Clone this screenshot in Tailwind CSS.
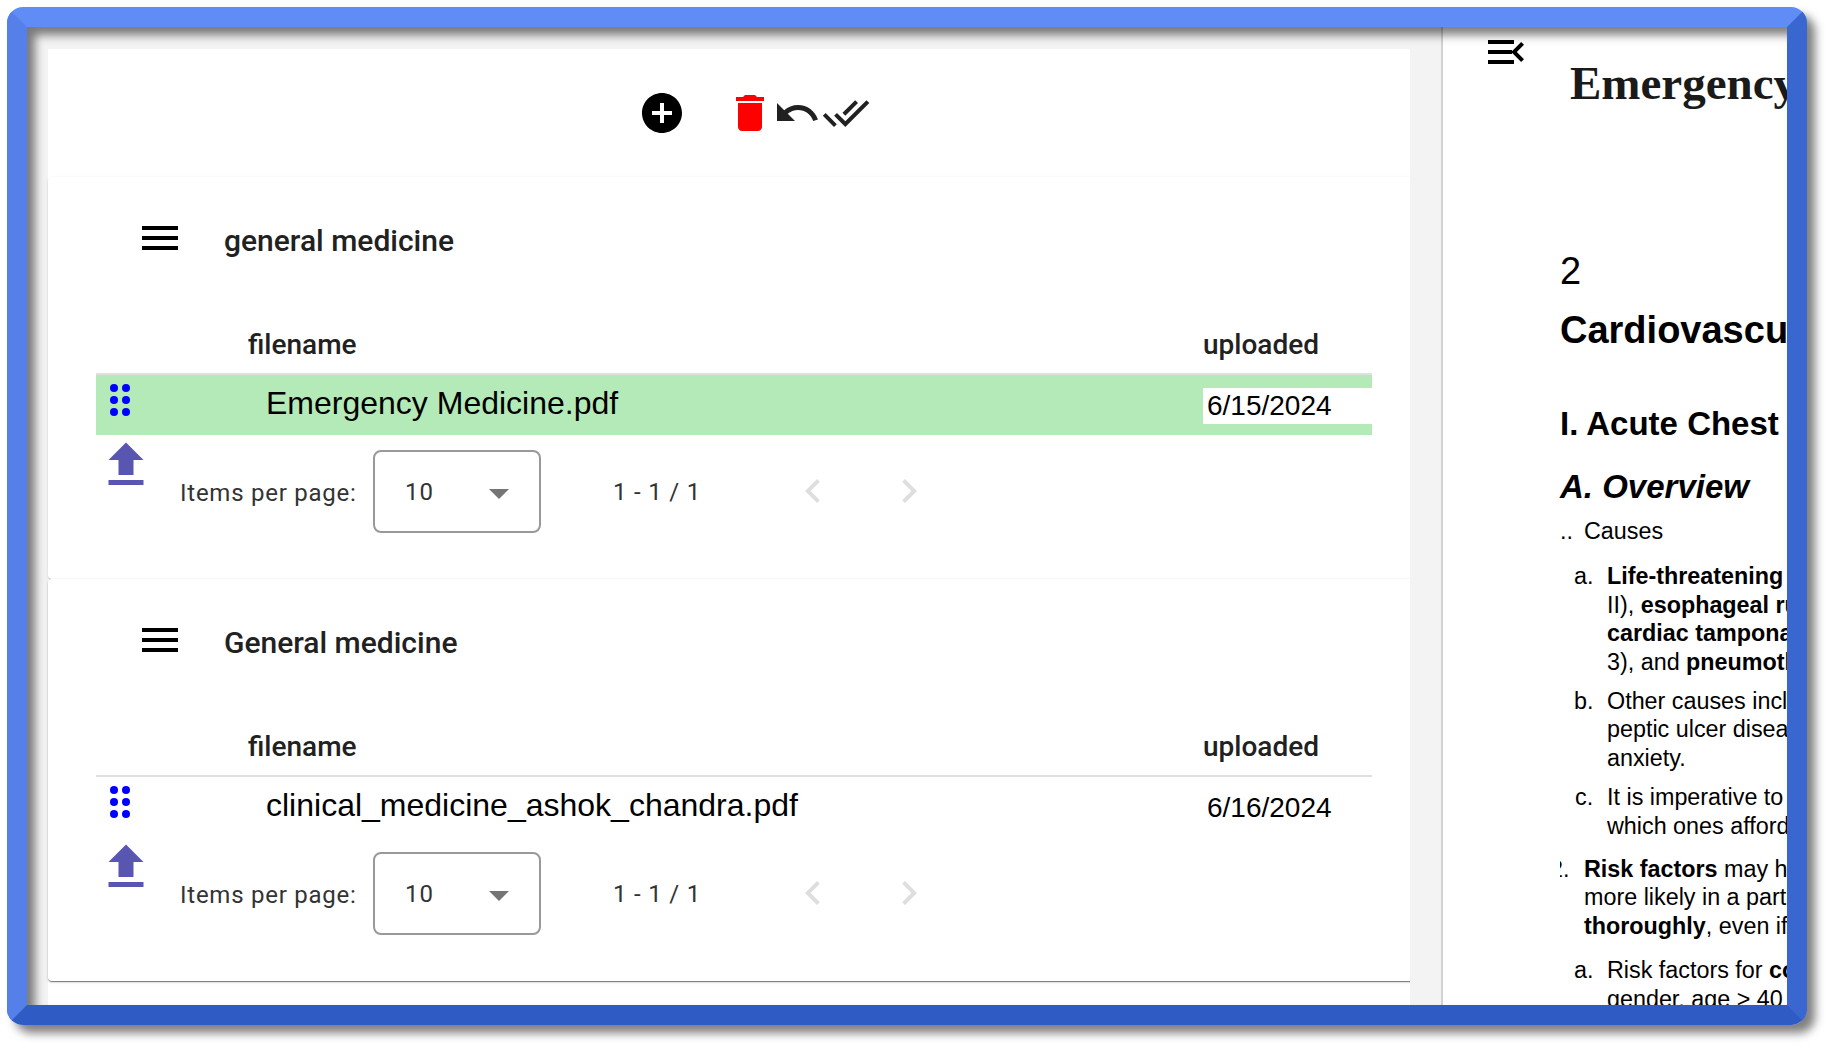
<!DOCTYPE html>
<html lang="en">

<head>
	<meta charset="UTF-8" />
	<meta name="viewport" content="width=device-width, initial-scale=1.0" />
	<title>Documents</title>
	<script src="https://cdn.jsdelivr.net/npm/@tailwindcss/browser@4"></script>
</head>

<body class="bg-white h-screen overflow-hidden font-['Roboto',sans-serif]">
	<div class="pl-[7px] pt-[7px]">
		<div class="relative w-[1800px] h-[1018px] border-[20px] border-t-[#5f8cf5] border-l-[#5580ea] border-r-[#3a66d0] border-b-[#2f5cc4] rounded-[16px] shadow-[8px_8px_10px_rgba(0,0,0,0.5)] flex overflow-hidden">

			<!-- left: document lists -->
			<div class="w-[1414px] h-full bg-[#f3f3f3] pl-[21px] pr-[31px] pt-[22px] overflow-hidden shrink-0">
				<div class="bg-white h-[1000px] [clip-path:inset(0_0_0_-10px)]">
					<div class="h-[128px] flex items-center pl-[590px]">
						<svg class="w-12 h-12" viewBox="0 0 24 24" fill="#000"><path d="M12 2C6.48 2 2 6.48 2 12s4.48 10 10 10 10-4.48 10-10S17.52 2 12 2zm5 11h-4v4h-2v-4H7v-2h4V7h2v4h4v2z" /></svg>
						<svg class="w-12 h-12 ml-10" viewBox="0 0 24 24" fill="#ff0000"><path d="M6 19c0 1.1.9 2 2 2h8c1.1 0 2-.9 2-2V7H6v12zM19 4h-3.5l-1-1h-5l-1 1H5v2h14V4z" /></svg>
						<svg class="w-12 h-12 -ml-px" viewBox="0 0 24 24" fill="#212121"><path d="M12.5 8c-2.65 0-5.05.99-6.9 2.6L2 7v9h9l-3.62-3.62c1.39-1.16 3.16-1.88 5.12-1.88 3.54 0 6.55 2.31 7.6 5.5l2.37-.78C21.08 11.03 17.15 8 12.5 8z" /></svg>
						<svg class="w-12 h-12 ml-px" viewBox="0 0 24 24" fill="#212121"><path d="M18 7l-1.41-1.41-6.34 6.34 1.41 1.41L18 7zm4.24-1.41L11.66 16.17 7.48 12l-1.41 1.41L11.66 19l12-12-1.42-1.41zM.41 13.41L6 19l1.41-1.41L1.83 12 .41 13.41z" /></svg>
					</div>

					<!-- card 1 -->
					<section class="relative h-[402px] mr-[-8px] bg-white rounded-[4px] pl-[48px] pr-[46px] pt-[37px] shadow-[0_2px_1px_-1px_rgba(0,0,0,0.2),0_1px_1px_rgba(0,0,0,0.14),0_1px_3px_rgba(0,0,0,0.12)]">
						<div class="flex items-center h-[48px] pl-[40px]">
							<svg class="w-12 h-12" viewBox="0 0 24 24" fill="#000"><path d="M3 18h18v-2H3v2zm0-5h18v-2H3v2zm0-7v2h18V6H3z" /></svg>
							<h2 class="ml-[40px] text-[30px] font-medium text-[#212121] mt-[4px]">general medicine</h2>
						</div>
						<div class="flex mt-[59px] h-[54px] pb-[5px] items-center border-b-2 border-[#e0e0e0] text-[28px] font-medium text-[#212121]">
							<span class="w-[1107px] pl-[152px]">filename</span>
							<span>uploaded</span>
						</div>
						<div class="flex items-center h-[60px] bg-[#b4eab7] text-black font-['Liberation_Sans',sans-serif]">
							<svg class="w-[48px] h-[48px] ml-[-4px] mt-[-21px] shrink-0" viewBox="0 0 48 48" fill="#0000ff"><circle cx="22" cy="17" r="4" /><circle cx="34" cy="17" r="4" /><circle cx="22" cy="29" r="4" /><circle cx="34" cy="29" r="4" /><circle cx="22" cy="41" r="4" /><circle cx="34" cy="41" r="4" /></svg>
							<span class="w-[1063px] pl-[126px] text-[32px] mt-[-5px]">Emergency Medicine.pdf</span>
							<span class="w-[169px] h-[36px] bg-white pl-[4px] text-[28px] leading-[36px] mt-[2px]">6/15/2024</span>
						</div>
						<div class="flex items-start">
							<svg class="w-[60px] h-[60px] shrink-0" viewBox="0 0 24 24" fill="#5856b0"><path d="M9 16h6v-6h4l-7-7-7 7h4zm-4 2h14v2H5z" /></svg>
							<span class="w-[193px] ml-[24px] mt-[43px] text-[24px] leading-[30px] tracking-[0.75px] text-[#333] shrink-0">Items per page:</span>
							<div class="relative w-[168px] h-[83px] mt-[15px] border-2 border-[#999] rounded-[8px] flex items-center pl-[30px] text-[24px] tracking-[1.1px] text-[#333] shrink-0">10
								<svg class="absolute left-[114px] top-[37px] w-[20px] h-[10px]" viewBox="0 0 20 10" fill="#757575"><path d="M0 0h20L10 10z" /></svg>
							</div>
							<span class="w-[175px] ml-[72px] mt-[42px] text-[24px] leading-[30px] tracking-[0.8px] text-[#333] shrink-0">1 - 1 / 1</span>
							<svg class="w-12 h-12 mt-[32px] ml-[1px] shrink-0" viewBox="0 0 24 24" fill="#dedede"><path d="M15.41 7.41L14 6l-6 6 6 6 1.41-1.41L10.83 12z" /></svg>
							<svg class="w-12 h-12 mt-[32px] ml-[48px] shrink-0" viewBox="0 0 24 24" fill="#dedede"><path d="M10 6L8.59 7.41 13.17 12l-4.58 4.59L10 18l6-6z" /></svg>
						</div>
					</section>

					<!-- card 2 -->
					<section class="relative h-[402px] mr-[-8px] bg-white rounded-[4px] pl-[48px] pr-[46px] pt-[37px] shadow-[0_2px_1px_-1px_rgba(0,0,0,0.3),0_1px_1px_rgba(0,0,0,0.2),0_1px_3px_rgba(0,0,0,0.2)]">
						<div class="flex items-center h-[48px] pl-[40px]">
							<svg class="w-12 h-12" viewBox="0 0 24 24" fill="#000"><path d="M3 18h18v-2H3v2zm0-5h18v-2H3v2zm0-7v2h18V6H3z" /></svg>
							<h2 class="ml-[40px] text-[30px] font-medium text-[#212121] mt-[4px]">General medicine</h2>
						</div>
						<div class="flex mt-[59px] h-[54px] pb-[5px] items-center border-b-2 border-[#e0e0e0] text-[28px] font-medium text-[#212121]">
							<span class="w-[1107px] pl-[152px]">filename</span>
							<span>uploaded</span>
						</div>
						<div class="flex items-center h-[60px] text-black font-['Liberation_Sans',sans-serif]">
							<svg class="w-[48px] h-[48px] ml-[-4px] mt-[-21px] shrink-0" viewBox="0 0 48 48" fill="#0000ff"><circle cx="22" cy="17" r="4" /><circle cx="34" cy="17" r="4" /><circle cx="22" cy="29" r="4" /><circle cx="34" cy="29" r="4" /><circle cx="22" cy="41" r="4" /><circle cx="34" cy="41" r="4" /></svg>
							<span class="w-[1063px] pl-[126px] text-[32px] mt-[-5px]">clinical_medicine_ashok_chandra.pdf</span>
							<span class="w-[169px] h-[36px] pl-[4px] text-[28px] leading-[36px] mt-[2px]">6/16/2024</span>
						</div>
						<div class="flex items-start">
							<svg class="w-[60px] h-[60px] shrink-0" viewBox="0 0 24 24" fill="#5856b0"><path d="M9 16h6v-6h4l-7-7-7 7h4zm-4 2h14v2H5z" /></svg>
							<span class="w-[193px] ml-[24px] mt-[43px] text-[24px] leading-[30px] tracking-[0.75px] text-[#333] shrink-0">Items per page:</span>
							<div class="relative w-[168px] h-[83px] mt-[15px] border-2 border-[#999] rounded-[8px] flex items-center pl-[30px] text-[24px] tracking-[1.1px] text-[#333] shrink-0">10
								<svg class="absolute left-[114px] top-[37px] w-[20px] h-[10px]" viewBox="0 0 20 10" fill="#757575"><path d="M0 0h20L10 10z" /></svg>
							</div>
							<span class="w-[175px] ml-[72px] mt-[42px] text-[24px] leading-[30px] tracking-[0.8px] text-[#333] shrink-0">1 - 1 / 1</span>
							<svg class="w-12 h-12 mt-[32px] ml-[1px] shrink-0" viewBox="0 0 24 24" fill="#dedede"><path d="M15.41 7.41L14 6l-6 6 6 6 1.41-1.41L10.83 12z" /></svg>
							<svg class="w-12 h-12 mt-[32px] ml-[48px] shrink-0" viewBox="0 0 24 24" fill="#dedede"><path d="M10 6L8.59 7.41 13.17 12l-4.58 4.59L10 18l6-6z" /></svg>
						</div>
					</section>
				</div>
			</div>

			<!-- right: pdf preview -->
			<div class="relative flex-1 h-full bg-white border-l-2 border-[#d2d2d2] overflow-hidden font-['Liberation_Sans',sans-serif] text-black whitespace-nowrap">
				<svg class="absolute left-[39px] top-[1px] w-12 h-12" viewBox="0 0 24 24" fill="#000"><path d="M3 18h13v-2H3v2zm0-5h12v-2H3v2zm0-7v2h13V6H3zm18 9.59L17.42 12 21 8.41 19.59 7l-5 5 5 5L21 15.59z" /></svg>
				<div class="pl-[117px] text-[23.33px] leading-[28.4px]">
					<h1 class="ml-[10px] mt-[29px] font-['Liberation_Serif',serif] font-bold text-[47px] leading-[54px] text-[#1a1a1a]">Emergency Medicine</h1>
					<p class="mt-[139px] text-[38px] leading-[44px]">2</p>
					<h2 class="mt-[15px] text-[38px] leading-[44px] font-bold">Cardiovascular Emergencies</h2>
					<h3 class="mt-[53px] text-[33px] leading-[38px] font-bold">I. Acute Chest Pain</h3>
					<h4 class="mt-[25px] text-[33px] leading-[38px] font-bold italic">A. Overview</h4>

					<div class="flex mt-[11px]"><span class="w-[24px] shrink-0">..</span><span>Causes</span></div>
					<div class="flex mt-[17px]"><span class="w-[47px] pl-[14px] shrink-0">a.</span><div><b>Life-threatening causes</b><br>II), <b>esophageal rupture</b><br><b>cardiac tamponade</b><br>3), and <b>pneumothorax</b></div></div>
					<div class="flex mt-[11px]"><span class="w-[47px] pl-[14px] shrink-0">b.</span><div>Other causes include<br>peptic ulcer disease<br>anxiety.</div></div>
					<div class="flex mt-[11px]"><span class="w-[47px] pl-[15px] shrink-0">c.</span><div>It is imperative to<br>which ones afford</div></div>
					<div class="flex mt-[15px]"><span class="w-[24px] shrink-0"><span class="block w-[9px] overflow-hidden"><span class="block -ml-[10px]">2.</span></span></span><div><b>Risk factors</b> may have<br>more likely in a particular<br><b>thoroughly</b>, even if</div></div>
					<div class="flex mt-[16px]"><span class="w-[47px] pl-[14px] shrink-0">a.</span><div>Risk factors for <b>coronary</b><br>gender, age &gt; 40</div></div>
				</div>
			</div>

			<!-- inset shadow of the window frame -->
			<div class="absolute inset-0 pointer-events-none shadow-[inset_8px_8px_10px_rgba(0,0,0,0.5)]"></div>
		</div>
	</div>
</body>

</html>
